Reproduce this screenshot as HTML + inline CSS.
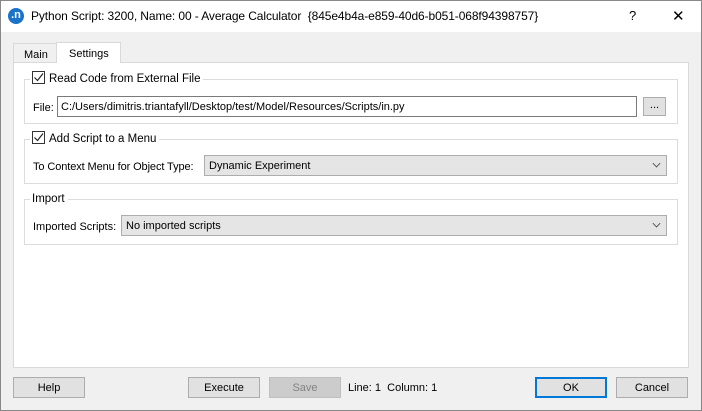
<!DOCTYPE html><html><head><style>
*{box-sizing:border-box;margin:0;padding:0}
body{width:702px;height:411px;background:#f0f0f0;font:11px "Liberation Sans",sans-serif;color:#000;position:relative;overflow:hidden;border:1px solid #888}
.a{position:absolute;white-space:nowrap}
.title{left:0;top:0;width:700px;height:31px;background:#fff}
.btn{position:absolute;height:21px;background:#e1e1e1;border:1px solid #adadad;text-align:center;line-height:20px}
.grp{position:absolute;border:1px solid #dcdcdc;left:23px;width:654px}
.lg{position:absolute;background:#fff;padding:0 3px 0 2px;top:-9px;left:5px;white-space:nowrap;line-height:16px;font-size:11.5px}
.cb{display:inline-block;width:13px;height:13px;border:1px solid #333;vertical-align:-2px;margin-right:4px;position:relative;background:#fff}
.combo{position:absolute;height:21px;background:#e5e5e5;border:1px solid #adadad;line-height:21px;padding-left:4px}
.chev{position:absolute;right:6px;top:4px;width:7px;height:7px;border-right:1px solid #444;border-bottom:1px solid #444;transform:rotate(45deg) scale(.8)}
</style></head><body>
<div class="a title"></div>
<div class="a" style="left:7px;top:7px;width:16px;height:16px;border-radius:50%;background:#1a73c8;color:#fff;font-size:11px;line-height:15px;text-align:center;font-weight:bold">.n</div>
<div class="a" style="left:30px;top:8px;font-size:12px;letter-spacing:-0.1px">Python Script: 3200, Name: 00 - Average Calculator&nbsp; {845e4b4a-e859-40d6-b051-068f94398757}</div>
<div class="a" style="left:628px;top:7px;font-size:13px">?</div>
<div class="a" style="left:671px;top:6px;font-size:15px">✕</div>
<div class="a" style="left:12px;top:42px;width:44px;height:20px;border:1px solid #d9d9d9;background:#f0f0f0;padding:5px 0 0 10px">Main</div>
<div class="a" style="left:12px;top:61px;width:676px;height:306px;background:#fff;border:1px solid #d9d9d9"></div>
<div class="a" style="left:55px;top:41px;width:65px;height:21px;border:1px solid #d9d9d9;border-bottom:none;background:#fff;padding:5px 0 0 12px">Settings</div>
<div class="grp" style="top:78px;height:45px"><div class="lg"><span class="cb"><svg width="11" height="11" style="position:absolute;left:0;top:0"><path d="M1.5 5.5l3 3 5.5-7" fill="none" stroke="#222" stroke-width="1.2"/></svg></span>Read Code from External File</div></div>
<div class="a" style="left:32px;top:101px">File:</div>
<div class="a" style="left:56px;top:95px;width:580px;height:21px;border:1px solid #7a7a7a;background:#fff;padding:4px 0 0 3px">C:/Users/dimitris.triantafyll/Desktop/test/Model/Resources/Scripts/in.py</div>
<div class="btn" style="left:642px;top:96px;width:23px;height:19px;line-height:15px">...</div>
<div class="grp" style="top:138px;height:45px"><div class="lg"><span class="cb"><svg width="11" height="11" style="position:absolute;left:0;top:0"><path d="M1.5 5.5l3 3 5.5-7" fill="none" stroke="#222" stroke-width="1.2"/></svg></span>Add Script to a Menu</div></div>
<div class="a" style="left:32px;top:160px;letter-spacing:-0.1px">To Context Menu for Object Type:</div>
<div class="combo" style="left:203px;top:154px;width:463px">Dynamic Experiment<span class="chev"></span></div>
<div class="grp" style="top:198px;height:46px"><div class="lg">Import</div></div>
<div class="a" style="left:32px;top:220px">Imported Scripts:</div>
<div class="combo" style="left:120px;top:214px;width:546px">No imported scripts<span class="chev"></span></div>
<div class="btn" style="left:12px;top:376px;width:72px">Help</div>
<div class="btn" style="left:187px;top:376px;width:72px">Execute</div>
<div class="btn" style="left:268px;top:376px;width:72px;background:#ccc;border-color:#bfbfbf;color:#838383">Save</div>
<div class="a" style="left:347px;top:381px">Line: 1&nbsp; Column: 1</div>
<div class="btn" style="left:534px;top:376px;width:72px;border:2px solid #0078d7;line-height:18px">OK</div>
<div class="btn" style="left:615px;top:376px;width:72px">Cancel</div>
</body></html>
